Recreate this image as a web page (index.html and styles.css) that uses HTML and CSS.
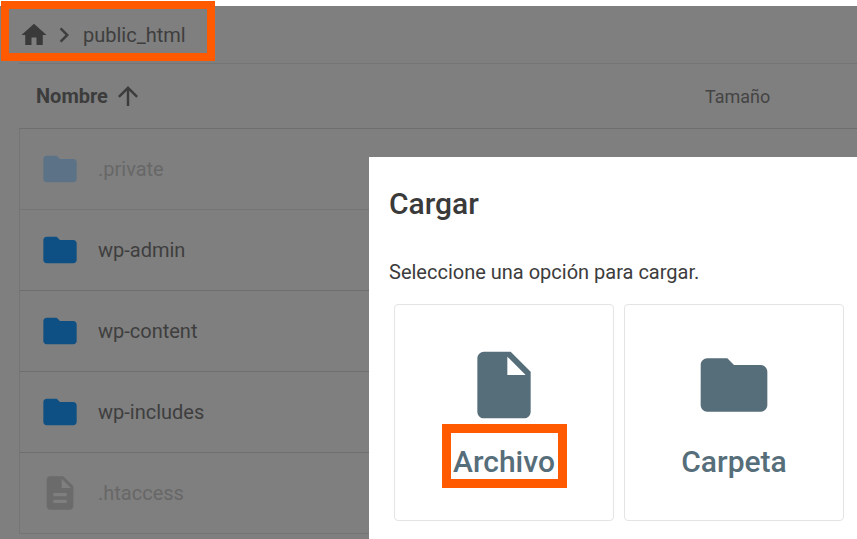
FILE: index.html
```html
<!DOCTYPE html>
<html lang="es">
<head>
<meta charset="utf-8">
<title>Cargar</title>
<link rel="stylesheet" href="styles.css">
</head>
<body>
<div class="page">
  <main class="manager">
    <nav class="crumbs">
      <svg class="i-home" viewBox="0 0 24 24"><path d="M10 20v-6h4v6h5v-8h3L12 3 2 12h3v8z"/></svg>
      <svg class="i-chev" viewBox="0 0 24 24"><path d="M10 6L8.59 7.41 13.17 12l-4.58 4.59L10 18l6-6z"/></svg>
      <span class="crumb-text">public_html</span>
    </nav>
    <div class="table">
      <div class="head">
        <span class="th-name">Nombre</span>
        <svg class="i-arrow" viewBox="0 0 24 24"><path d="M4 12l1.41 1.41L11 7.83V20h2V7.83l5.58 5.59L20 12l-8-8-8 8z"/></svg>
        <span class="th-size">Tamaño</span>
      </div>
      <div class="row faded">
        <svg class="i-row folder" viewBox="0 0 24 24"><path d="M10 4H4c-1.1 0-1.99.9-1.99 2L2 18c0 1.1.9 2 2 2h16c1.1 0 2-.9 2-2V8c0-1.1-.9-2-2-2h-8l-2-2z"/></svg>
        <span>.private</span>
      </div>
      <div class="row">
        <svg class="i-row folder" viewBox="0 0 24 24"><path d="M10 4H4c-1.1 0-1.99.9-1.99 2L2 18c0 1.1.9 2 2 2h16c1.1 0 2-.9 2-2V8c0-1.1-.9-2-2-2h-8l-2-2z"/></svg>
        <span>wp-admin</span>
      </div>
      <div class="row">
        <svg class="i-row folder" viewBox="0 0 24 24"><path d="M10 4H4c-1.1 0-1.99.9-1.99 2L2 18c0 1.1.9 2 2 2h16c1.1 0 2-.9 2-2V8c0-1.1-.9-2-2-2h-8l-2-2z"/></svg>
        <span>wp-content</span>
      </div>
      <div class="row">
        <svg class="i-row folder" viewBox="0 0 24 24"><path d="M10 4H4c-1.1 0-1.99.9-1.99 2L2 18c0 1.1.9 2 2 2h16c1.1 0 2-.9 2-2V8c0-1.1-.9-2-2-2h-8l-2-2z"/></svg>
        <span>wp-includes</span>
      </div>
      <div class="row faded">
        <svg class="i-row file" viewBox="0 0 24 24"><path d="M14 2H6c-1.1 0-1.99.9-1.99 2L4 20c0 1.1.89 2 1.99 2H18c1.1 0 2-.9 2-2V8l-6-6zm2 16H8v-2h8v2zm0-4H8v-2h8v2zm-3-5V3.5L18.5 9H13z"/></svg>
        <span>.htaccess</span>
      </div>
    </div>
  </main>

  <section class="modal">
    <h2 class="modal-title">Cargar</h2>
    <p class="modal-text">Seleccione una opción para cargar.</p>
    <div class="options">
      <div class="option">
        <svg class="i-option" viewBox="0 0 24 24"><path d="M6 2c-1.1 0-1.99.9-1.99 2L4 20c0 1.1.89 2 1.99 2H18c1.1 0 2-.9 2-2V8l-6-6H6zm7 7V3.5L18.5 9H13z"/></svg>
        <span class="option-label">Archivo</span>
      </div>
      <div class="option">
        <svg class="i-option" viewBox="0 0 24 24"><path d="M10 4H4c-1.1 0-1.99.9-1.99 2L2 18c0 1.1.9 2 2 2h16c1.1 0 2-.9 2-2V8c0-1.1-.9-2-2-2h-8l-2-2z"/></svg>
        <span class="option-label">Carpeta</span>
      </div>
    </div>
  </section>

  <div class="mark mark-crumbs"></div>
  <div class="mark mark-archivo"></div>
</div>
</body>
</html>
```
FILE: styles.css
```css
* { box-sizing: border-box; }
html, body { margin: 0; padding: 0; background: #fff; }
body { font-family: Roboto, "Liberation Sans", sans-serif; color: #3e3e3e; }

.page {
  position: relative;
  width: 857px;
  height: 539px;
  overflow: hidden;
  padding-top: 6px;
}

.manager {
  height: 533px;
  background: #7f7f7f;
  padding-left: 19px;
}

.crumbs {
  height: 58px;
  display: flex;
  align-items: center;
  font-size: 20px;
  color: #3e3e3e;
  border-bottom: 1px solid #757575;
}
.i-home { width: 30px; height: 30px; fill: #3a3a3a; flex: none; }
.i-chev { width: 30px; height: 30px; fill: #3e3e3e; flex: none; }
.crumb-text { margin-left: 4px; }

.head {
  height: 65px;
  display: flex;
  align-items: center;
  font-size: 20px;
  border-bottom: 1px solid #6e6e6e;
  padding-left: 17px;
}
.th-name { font-weight: 700; color: #3c3c3c; width: 77px; }
.i-arrow { width: 30px; height: 30px; fill: #3c3c3c; flex: none; }
.th-size { margin-left: 562px; font-size: 18px; color: #444; }

.row {
  height: 81px;
  display: flex;
  align-items: center;
  font-size: 20px;
  color: #3e3e3e;
  border-left: 1px solid #757575;
  border-bottom: 1px solid #6e6e6e;
  padding-left: 20px;
}
.row span { margin-left: 18px; }
.i-row { width: 40px; height: 40px; flex: none; }
.folder { fill: #0e5083; }
.file { fill: #6b6b6b; }
.row.faded { color: #676767; border-bottom-color: #757575; }
.row.faded .folder { fill: #5c7286; }

.modal {
  position: absolute;
  left: 369px;
  top: 157px;
  width: 488px;
  height: 382px;
  background: #fff;
  padding: 30px 13px 0 20px;
}
.modal-title {
  margin: 0;
  font-size: 30px;
  line-height: 34px;
  font-weight: 500;
  color: #3a3a3a;
}
.modal-text {
  margin: 39px 0 0;
  font-size: 20px;
  line-height: 24px;
  color: #3c3c3c;
}
.options {
  display: flex;
  gap: 10px;
  margin: 20px 0 0 5px;
}
.option {
  width: 220px;
  height: 217px;
  border: 1px solid #e4e4e4;
  border-radius: 4px;
  display: flex;
  flex-direction: column;
  align-items: center;
  padding-top: 40px;
}
.i-option { width: 80px; height: 80px; fill: #566e7a; flex: none; }
.option-label {
  margin-top: 19px;
  font-size: 30px;
  line-height: 36px;
  font-weight: 500;
  color: #566e7a;
}

.mark { position: absolute; border: 8px solid #ff5a00; }
.mark-crumbs { left: 1px; top: 1px; width: 214px; height: 60px; }
.mark-archivo { left: 442px; top: 424px; width: 125px; height: 64px; border-width: 9px; }
```
